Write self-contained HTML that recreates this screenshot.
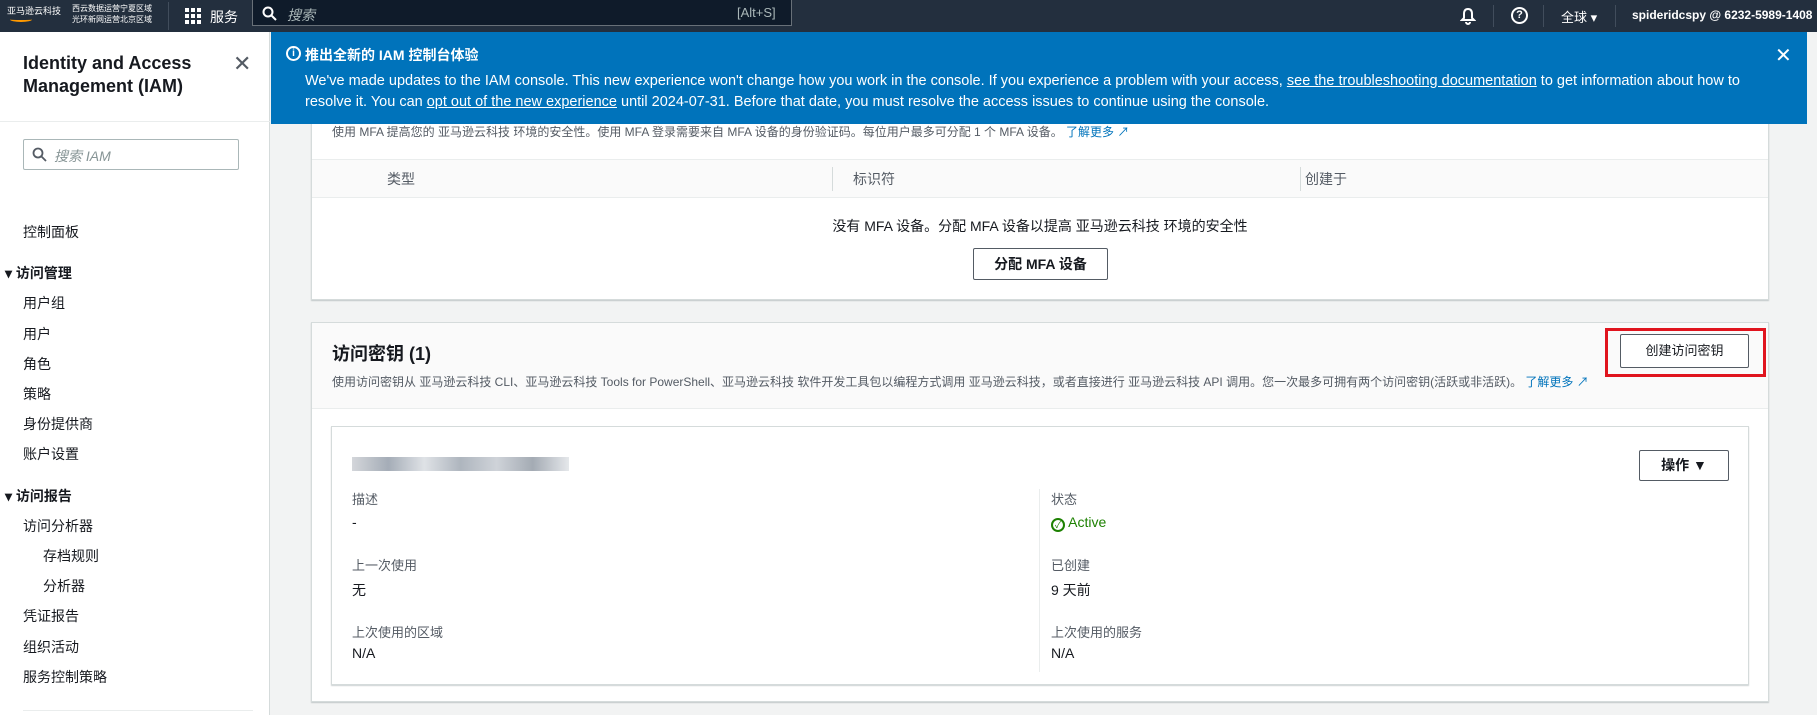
<!DOCTYPE html>
<html><head><meta charset="utf-8"><style>
*{margin:0;padding:0;box-sizing:border-box}
body{width:1817px;height:715px;overflow:hidden;background:#f2f3f3;font-family:"Liberation Sans","Noto Sans CJK SC",sans-serif;color:#16191f;position:relative;font-size:14px}
.a{position:absolute;white-space:nowrap}
.nav{position:absolute;left:0;top:0;width:1817px;height:32px;background:#232f3e;color:#fff}
.side{position:absolute;left:0;top:32px;width:270px;height:683px;background:#fff;border-right:1px solid #d5dbdb}
.side .i{position:absolute;left:23px;font-size:14px;color:#16191f}
.card{position:absolute;background:#fff;border:1px solid #d5dbdb;box-shadow:0 1px 1px rgba(0,28,36,.2)}
.btn{position:absolute;border:1px solid #545b64;background:#fff;font-size:14px;font-weight:bold;color:#545b64;text-align:center;border-radius:2px}
.lbl{font-size:13px;color:#545b64}
.val{font-size:14px;color:#16191f}
a{color:#0073bb}
</style></head><body>
<div class="nav">
  <div class="a" style="left:7px;top:4px;font-size:9px;color:#fff">亚马逊云科技</div>
  <div class="a" style="left:10px;top:17px;width:22px;height:5px;border-bottom:2px solid #ff9900;border-radius:0 0 50% 50%"></div>
  <div class="a" style="left:72px;top:3px;font-size:8px;line-height:11px">西云数据运营宁夏区域<br>光环新网运营北京区域</div>
  <div class="a" style="left:168px;top:2px;height:28px;border-left:1px solid #414d5c"></div>
  <svg class="a" style="left:185px;top:8px" width="16" height="16" viewBox="0 0 16 16" fill="#fff"><rect x="0" y="0" width="4" height="4"/><rect x="6" y="0" width="4" height="4"/><rect x="12" y="0" width="4" height="4"/><rect x="0" y="6" width="4" height="4"/><rect x="6" y="6" width="4" height="4"/><rect x="12" y="6" width="4" height="4"/><rect x="0" y="12" width="4" height="4"/><rect x="6" y="12" width="4" height="4"/><rect x="12" y="12" width="4" height="4"/></svg>
  <div class="a" style="left:210px;top:7px;font-size:14px">服务</div>
  <div class="a" style="left:252px;top:0;width:540px;height:26px;border:1px solid #687078;border-top:none;background:#0f1b2a"></div>
  <svg class="a" style="left:262px;top:6px" width="15" height="15" viewBox="0 0 15 15"><circle cx="6" cy="6" r="4.5" fill="none" stroke="#fff" stroke-width="2"/><path d="M9.5 9.5L14 14" stroke="#fff" stroke-width="2"/></svg>
  <div class="a" style="left:287px;top:5px;font-size:14px;font-style:italic;color:#aab7b8">搜索</div>
  <div class="a" style="left:737px;top:5px;font-size:13px;color:#aab7b8">[Alt+S]</div>
  <svg class="a" style="left:1460px;top:7px" width="16" height="18" viewBox="0 0 16 18"><path d="M8 2C5 2 4 4 4 7v4l-2 2h12l-2-2V7c0-3-1-5-4-5zM6 15a2 2 0 004 0" fill="none" stroke="#fff" stroke-width="2"/></svg>
  <div class="a" style="left:1493px;top:5px;height:22px;border-left:1px solid #414d5c"></div>
  <div class="a" style="left:1511px;top:7px;width:17px;height:17px;border:2px solid #fff;border-radius:50%;font-size:11px;font-weight:bold;text-align:center;line-height:13px">?</div>
  <div class="a" style="left:1543px;top:5px;height:22px;border-left:1px solid #414d5c"></div>
  <div class="a" style="left:1561px;top:7px;font-size:13px">全球 ▾</div>
  <div class="a" style="left:1615px;top:5px;height:22px;border-left:1px solid #414d5c"></div>
  <div class="a" style="left:1632px;top:8px;font-size:12px;font-weight:bold">spideridcspy @ 6232-5989-1408</div>
</div>

<div class="side">
  <div class="a" style="left:23px;top:20px;font-size:18px;font-weight:bold;line-height:23px;white-space:normal;width:210px">Identity and Access Management (IAM)</div>
  <div class="a" style="left:233px;top:19px;font-size:22px;color:#545b64">✕</div>
  <div class="a" style="left:0;top:89px;width:270px;border-top:1px solid #eaeded"></div>
  <div class="a" style="left:23px;top:107px;width:216px;height:31px;border:1px solid #aab7b8;border-radius:2px"></div>
  <svg class="a" style="left:32px;top:115px" width="15" height="15" viewBox="0 0 15 15"><circle cx="6" cy="6" r="4.5" fill="none" stroke="#545b64" stroke-width="1.8"/><path d="M9.5 9.5L14 14" stroke="#545b64" stroke-width="1.8"/></svg>
  <div class="a" style="left:54px;top:114px;font-size:14px;font-style:italic;color:#879596">搜索 IAM</div>
  <div class="i" style="top:190px">控制面板</div>
  <div class="i" style="top:231px;left:5px;font-weight:bold">▾ 访问管理</div>
  <div class="i" style="top:261px">用户组</div>
  <div class="i" style="top:292px">用户</div>
  <div class="i" style="top:322px">角色</div>
  <div class="i" style="top:352px">策略</div>
  <div class="i" style="top:382px">身份提供商</div>
  <div class="i" style="top:412px">账户设置</div>
  <div class="i" style="top:454px;left:5px;font-weight:bold">▾ 访问报告</div>
  <div class="i" style="top:484px">访问分析器</div>
  <div class="i" style="top:514px;left:43px">存档规则</div>
  <div class="i" style="top:544px;left:43px">分析器</div>
  <div class="i" style="top:574px">凭证报告</div>
  <div class="i" style="top:605px">组织活动</div>
  <div class="i" style="top:635px">服务控制策略</div>
  <div class="a" style="left:23px;top:678px;width:230px;border-top:1px solid #eaeded"></div>
</div>

<!-- MFA card -->
<div class="card" style="left:311px;top:100px;width:1458px;height:200px">
  <div class="a" style="left:20px;top:22px;font-size:12px;color:#545b64">使用 MFA 提高您的 亚马逊云科技 环境的安全性。使用 MFA 登录需要来自 MFA 设备的身份验证码。每位用户最多可分配 1 个 MFA 设备。 <a>了解更多 ↗</a></div>
  <div class="a" style="left:0;top:58px;width:1456px;height:39px;background:#fafafa;border-top:1px solid #eaeded;border-bottom:1px solid #eaeded"></div>
  <div class="a" style="left:75px;top:68px;font-size:14px;color:#545b64">类型</div>
  <div class="a" style="left:520px;top:66px;height:24px;border-left:1px solid #d5dbdb"></div>
  <div class="a" style="left:541px;top:68px;font-size:14px;color:#545b64">标识符</div>
  <div class="a" style="left:988px;top:66px;height:24px;border-left:1px solid #d5dbdb"></div>
  <div class="a" style="left:993px;top:68px;font-size:14px;color:#545b64">创建于</div>
  <div class="a" style="left:0;width:1456px;top:115px;text-align:center;font-size:14px;color:#16191f">没有 MFA 设备。分配 MFA 设备以提高 亚马逊云科技 环境的安全性</div>
  <div class="btn" style="left:661px;top:147px;width:135px;height:32px;line-height:30px;color:#16191f">分配 MFA 设备</div>
</div>

<!-- Banner -->
<div class="a" style="left:271px;top:32px;width:1536px;height:92px;background:#0073bb;color:#fff">
  <div class="a" style="left:15px;top:14px;width:15px;height:15px;border:2px solid #fff;border-radius:50%;font-size:10px;font-weight:bold;text-align:center;line-height:11px">i</div>
  <div class="a" style="left:34px;top:13px;font-size:14px;font-weight:bold">推出全新的 IAM 控制台体验</div>
  <div class="a" style="left:34px;top:39px;font-size:14.5px;line-height:21px;white-space:normal;width:1440px">We've made updates to the IAM console. This new experience won't change how you work in the console. If you experience a problem with your access, <u>see the troubleshooting documentation</u> to get information about how to resolve it. You can <u>opt out of the new experience</u> until 2024-07-31. Before that date, you must resolve the access issues to continue using the console.</div>
  <div class="a" style="left:1504px;top:11px;font-size:20px">✕</div>
</div>

<!-- Access key card -->
<div class="card" style="left:311px;top:322px;width:1458px;height:380px">
  <div class="a" style="left:0;top:0;width:1456px;height:86px;background:#fafafa;border-bottom:1px solid #eaeded"></div>
  <div class="a" style="left:20px;top:17px;font-size:18px;font-weight:bold">访问密钥 (1)</div>
  <div class="a" style="left:20px;top:50px;font-size:12px;color:#545b64">使用访问密钥从 亚马逊云科技 CLI、亚马逊云科技 Tools for PowerShell、亚马逊云科技 软件开发工具包以编程方式调用 亚马逊云科技，或者直接进行 亚马逊云科技 API 调用。您一次最多可拥有两个访问密钥(活跃或非活跃)。 <a>了解更多 ↗</a></div>
  <div class="a" style="left:1293px;top:5px;width:161px;height:49px;border:3px solid #e0141e"></div>
  <div class="btn" style="left:1308px;top:11px;width:129px;height:34px;line-height:32px;color:#16191f;font-weight:normal;font-size:13px">创建访问密钥</div>
  <div class="card" style="left:19px;top:103px;width:1418px;height:259px">
    <div class="a" style="left:20px;top:30px;width:217px;height:14px;background:linear-gradient(90deg,#c9ccd1,#8e98a5,#d7dbe0,#9aa3ae,#c3c8cf,#8d96a1,#dfe2e6);opacity:.8"></div>
    <div class="btn" style="left:1307px;top:23px;width:90px;height:31px;line-height:29px;color:#16191f">操作 ▼</div>
    <div class="a" style="left:707px;top:62px;height:183px;border-left:1px solid #eaeded"></div>
    <div class="a lbl" style="left:20px;top:62px">描述</div>
    <div class="a val" style="left:20px;top:87px">-</div>
    <div class="a lbl" style="left:20px;top:128px">上一次使用</div>
    <div class="a val" style="left:20px;top:153px">无</div>
    <div class="a lbl" style="left:20px;top:195px">上次使用的区域</div>
    <div class="a val" style="left:20px;top:218px">N/A</div>
    <div class="a lbl" style="left:719px;top:62px">状态</div>
    <div class="a" style="left:719px;top:87px;font-size:14px;color:#1d8102"><span style="display:inline-block;width:14px;height:14px;border:2px solid #1d8102;border-radius:50%;font-size:9px;line-height:10px;text-align:center;vertical-align:-1px">✓</span> Active</div>
    <div class="a lbl" style="left:719px;top:128px">已创建</div>
    <div class="a val" style="left:719px;top:153px">9 天前</div>
    <div class="a lbl" style="left:719px;top:195px">上次使用的服务</div>
    <div class="a val" style="left:719px;top:218px">N/A</div>
  </div>
</div>
</body></html>
